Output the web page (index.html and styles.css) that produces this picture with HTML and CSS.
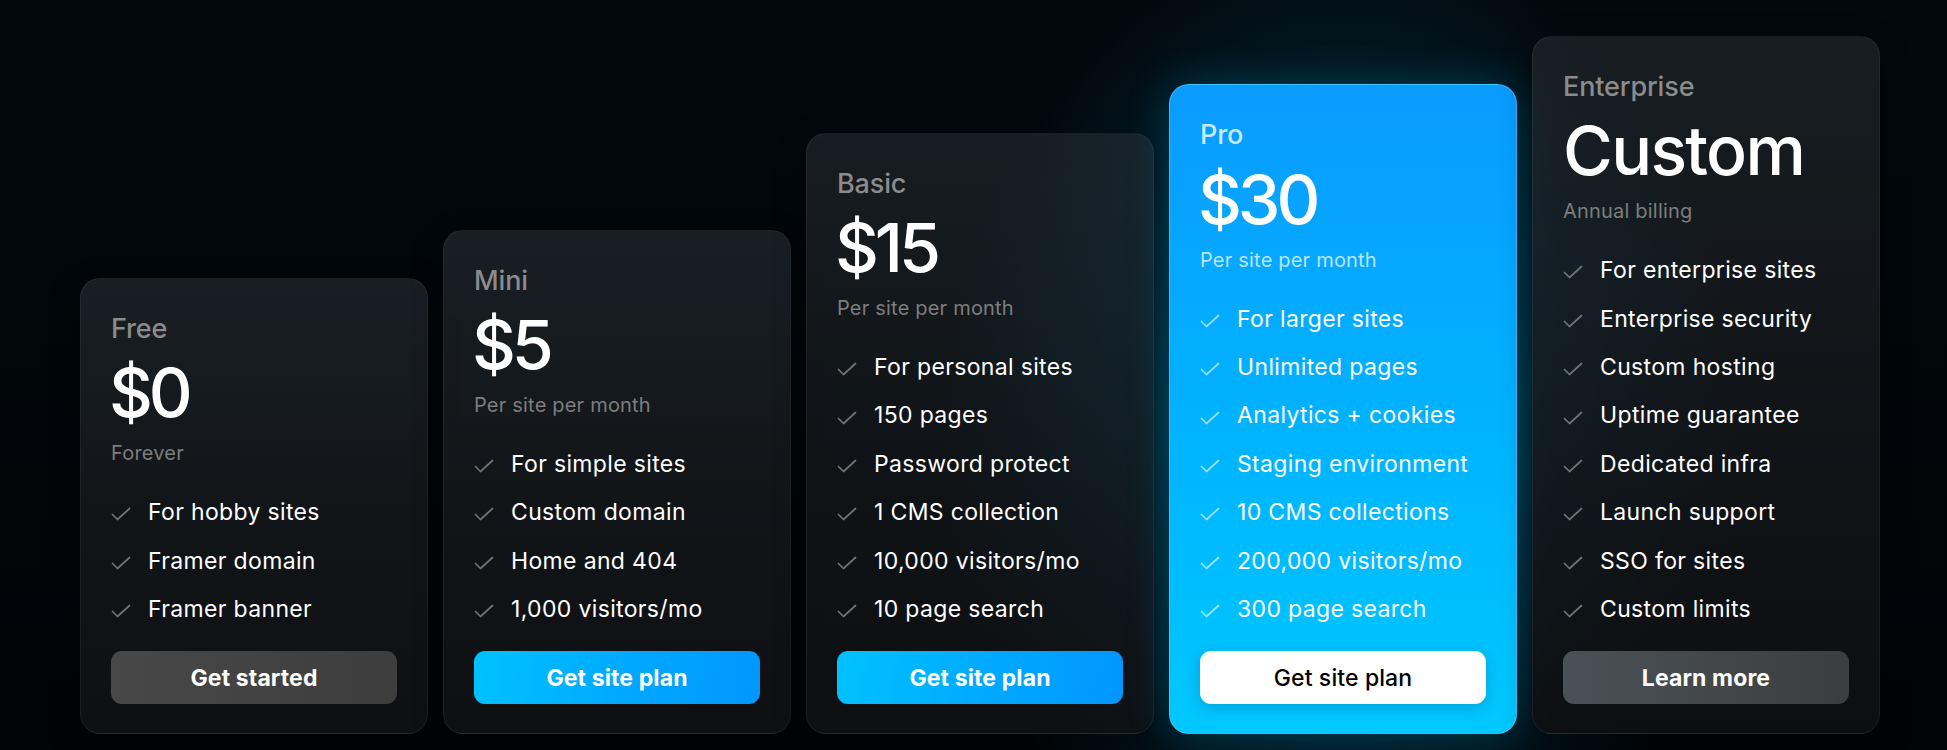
FILE: index.html
```html
<!DOCTYPE html>
<html lang="en">
<head>
<meta charset="utf-8">
<title>Pricing</title>
<link rel="stylesheet" href="styles.css">
</head>
<body>
<main class="pricing">
  <section class="card">
    <h3 class="plan">Free</h3>
    <div class="price price-num">$0</div>
    <p class="sub">Forever</p>
    <ul class="features">
      <li><svg class="check" viewBox="0 0 22 14"><path d="M1.5 7.5 L6.5 12.5 L18.5 1.5"/></svg>For hobby sites</li>
      <li><svg class="check" viewBox="0 0 22 14"><path d="M1.5 7.5 L6.5 12.5 L18.5 1.5"/></svg>Framer domain</li>
      <li><svg class="check" viewBox="0 0 22 14"><path d="M1.5 7.5 L6.5 12.5 L18.5 1.5"/></svg>Framer banner</li>
    </ul>
    <a class="btn btn-gray">Get started</a>
  </section>
  <section class="card">
    <h3 class="plan">Mini</h3>
    <div class="price price-num">$5</div>
    <p class="sub">Per site per month</p>
    <ul class="features">
      <li><svg class="check" viewBox="0 0 22 14"><path d="M1.5 7.5 L6.5 12.5 L18.5 1.5"/></svg>For simple sites</li>
      <li><svg class="check" viewBox="0 0 22 14"><path d="M1.5 7.5 L6.5 12.5 L18.5 1.5"/></svg>Custom domain</li>
      <li><svg class="check" viewBox="0 0 22 14"><path d="M1.5 7.5 L6.5 12.5 L18.5 1.5"/></svg>Home and 404</li>
      <li><svg class="check" viewBox="0 0 22 14"><path d="M1.5 7.5 L6.5 12.5 L18.5 1.5"/></svg>1,000 visitors/mo</li>
    </ul>
    <a class="btn btn-blue">Get site plan</a>
  </section>
  <section class="card card-basic">
    <h3 class="plan">Basic</h3>
    <div class="price price-num">$15</div>
    <p class="sub">Per site per month</p>
    <ul class="features">
      <li><svg class="check" viewBox="0 0 22 14"><path d="M1.5 7.5 L6.5 12.5 L18.5 1.5"/></svg>For personal sites</li>
      <li><svg class="check" viewBox="0 0 22 14"><path d="M1.5 7.5 L6.5 12.5 L18.5 1.5"/></svg>150 pages</li>
      <li><svg class="check" viewBox="0 0 22 14"><path d="M1.5 7.5 L6.5 12.5 L18.5 1.5"/></svg>Password protect</li>
      <li><svg class="check" viewBox="0 0 22 14"><path d="M1.5 7.5 L6.5 12.5 L18.5 1.5"/></svg>1 CMS collection</li>
      <li><svg class="check" viewBox="0 0 22 14"><path d="M1.5 7.5 L6.5 12.5 L18.5 1.5"/></svg>10,000 visitors/mo</li>
      <li><svg class="check" viewBox="0 0 22 14"><path d="M1.5 7.5 L6.5 12.5 L18.5 1.5"/></svg>10 page search</li>
    </ul>
    <a class="btn btn-blue">Get site plan</a>
  </section>
  <section class="card card-pro">
    <h3 class="plan">Pro</h3>
    <div class="price price-num">$30</div>
    <p class="sub">Per site per month</p>
    <ul class="features">
      <li><svg class="check" viewBox="0 0 22 14"><path d="M1.5 7.5 L6.5 12.5 L18.5 1.5"/></svg>For larger sites</li>
      <li><svg class="check" viewBox="0 0 22 14"><path d="M1.5 7.5 L6.5 12.5 L18.5 1.5"/></svg>Unlimited pages</li>
      <li><svg class="check" viewBox="0 0 22 14"><path d="M1.5 7.5 L6.5 12.5 L18.5 1.5"/></svg>Analytics + cookies</li>
      <li><svg class="check" viewBox="0 0 22 14"><path d="M1.5 7.5 L6.5 12.5 L18.5 1.5"/></svg>Staging environment</li>
      <li><svg class="check" viewBox="0 0 22 14"><path d="M1.5 7.5 L6.5 12.5 L18.5 1.5"/></svg>10 CMS collections</li>
      <li><svg class="check" viewBox="0 0 22 14"><path d="M1.5 7.5 L6.5 12.5 L18.5 1.5"/></svg>200,000 visitors/mo</li>
      <li><svg class="check" viewBox="0 0 22 14"><path d="M1.5 7.5 L6.5 12.5 L18.5 1.5"/></svg>300 page search</li>
    </ul>
    <a class="btn btn-white">Get site plan</a>
  </section>
  <section class="card card-ent">
    <h3 class="plan">Enterprise</h3>
    <div class="price">Custom</div>
    <p class="sub">Annual billing</p>
    <ul class="features">
      <li><svg class="check" viewBox="0 0 22 14"><path d="M1.5 7.5 L6.5 12.5 L18.5 1.5"/></svg>For enterprise sites</li>
      <li><svg class="check" viewBox="0 0 22 14"><path d="M1.5 7.5 L6.5 12.5 L18.5 1.5"/></svg>Enterprise security</li>
      <li><svg class="check" viewBox="0 0 22 14"><path d="M1.5 7.5 L6.5 12.5 L18.5 1.5"/></svg>Custom hosting</li>
      <li><svg class="check" viewBox="0 0 22 14"><path d="M1.5 7.5 L6.5 12.5 L18.5 1.5"/></svg>Uptime guarantee</li>
      <li><svg class="check" viewBox="0 0 22 14"><path d="M1.5 7.5 L6.5 12.5 L18.5 1.5"/></svg>Dedicated infra</li>
      <li><svg class="check" viewBox="0 0 22 14"><path d="M1.5 7.5 L6.5 12.5 L18.5 1.5"/></svg>Launch support</li>
      <li><svg class="check" viewBox="0 0 22 14"><path d="M1.5 7.5 L6.5 12.5 L18.5 1.5"/></svg>SSO for sites</li>
      <li><svg class="check" viewBox="0 0 22 14"><path d="M1.5 7.5 L6.5 12.5 L18.5 1.5"/></svg>Custom limits</li>
    </ul>
    <a class="btn btn-gray btn-ent">Learn more</a>
  </section>
</main>
</body>
</html>
```
FILE: styles.css
```css
* { box-sizing: border-box; }

html, body {
  margin: 0;
  padding: 0;
  height: 750px;
  overflow: hidden;
}

body {
  font-family: "Inter", "Noto Sans", sans-serif;
  color: #fff;
  background:
    radial-gradient(ellipse 400px 500px at 1343px 430px, rgba(0, 175, 225, 0.55) 0%, rgba(0, 125, 170, 0.25) 50%, rgba(0, 60, 90, 0) 100%),
    linear-gradient(180deg, #02080c 0%, #010407 100%);
}

.pricing {
  display: flex;
  align-items: flex-end;
  gap: 15px;
  height: 750px;
  padding: 0 0 16px 80px;
}

.card {
  width: 348px;
  flex: none;
  display: flex;
  flex-direction: column;
  padding: 34px 30px 29px;
  border-radius: 20px;
  background: linear-gradient(180deg, rgba(44, 52, 58, 0.55) 0%, rgba(24, 27, 30, 0.72) 55%, rgba(16, 18, 20, 0.88) 100%);
  border: 1px solid rgba(255, 255, 255, 0.06);
  box-shadow: 0 10px 30px rgba(0, 0, 0, 0.35);
}

.card-basic {
  background: linear-gradient(180deg, rgba(44, 52, 58, 0.5) 0%, rgba(24, 27, 30, 0.65) 55%, rgba(16, 18, 20, 0.86) 100%);
}

.card-pro {
  background: linear-gradient(180deg, #0a9bff 0%, #00b4ff 55%, #00c8fe 100%);
  border-color: rgba(120, 200, 255, 0.5);
  box-shadow: 0 0 40px rgba(0, 170, 230, 0.25);
}

.card-ent {
  background: linear-gradient(180deg, rgba(40, 46, 51, 0.58) 0%, rgba(22, 25, 28, 0.76) 55%, rgba(14, 16, 18, 0.9) 100%);
}

.plan {
  margin: 0;
  font-size: 27px;
  line-height: 1.2;
  font-weight: 500;
  color: #8b8b8b;
  letter-spacing: -0.005em;
}

.card-pro .plan { color: rgba(255, 255, 255, 0.78); }

.price {
  margin-top: 13px;
  font-size: 68px;
  line-height: 1;
  font-weight: 500;
  letter-spacing: -0.025em;
  color: #fff;
}

.price-num {
  margin-left: -2px;
  letter-spacing: -0.06em;
}

.sub {
  margin: 16px 0 0;
  font-size: 20px;
  line-height: 22.8px;
  letter-spacing: 0.01em;
  color: #7d7d7d;
}

.card-pro .sub { color: rgba(255, 255, 255, 0.72); }

.features {
  list-style: none;
  margin: 34px 0 0;
  padding: 0;
  display: flex;
  flex-direction: column;
  gap: 22px;
}

.features li {
  display: flex;
  align-items: center;
  font-size: 23px;
  line-height: 26.4px;
  color: #fff;
  letter-spacing: 0.015em;
}

.check {
  width: 22px;
  height: 14px;
  margin: 4px 15px 0 0;
  flex: none;
  fill: none;
  stroke: #707274;
  stroke-width: 1.7;
  stroke-linecap: round;
  stroke-linejoin: round;
}

.card-pro .check { stroke: rgba(255, 255, 255, 0.6); }

.btn {
  margin-top: 28.5px;
  height: 53px;
  border-radius: 11px;
  display: flex;
  align-items: center;
  justify-content: center;
  font-size: 23px;
  font-weight: 700;
  letter-spacing: 0.005em;
  color: #fff;
  text-decoration: none;
}

.btn-gray {
  background: linear-gradient(90deg, #484848 0%, #3d3d3d 100%);
}

.btn-ent {
  background: linear-gradient(90deg, #4a5257 0%, #3c3d3e 100%);
}

.btn-blue {
  background: linear-gradient(100deg, #00c2ff 0%, #00aaff 50%, #0097ff 100%);
}

.btn-white {
  background: #fff;
  color: #000;
  font-weight: 500;
  box-shadow: 0 4px 14px rgba(0, 60, 120, 0.25);
}
```
